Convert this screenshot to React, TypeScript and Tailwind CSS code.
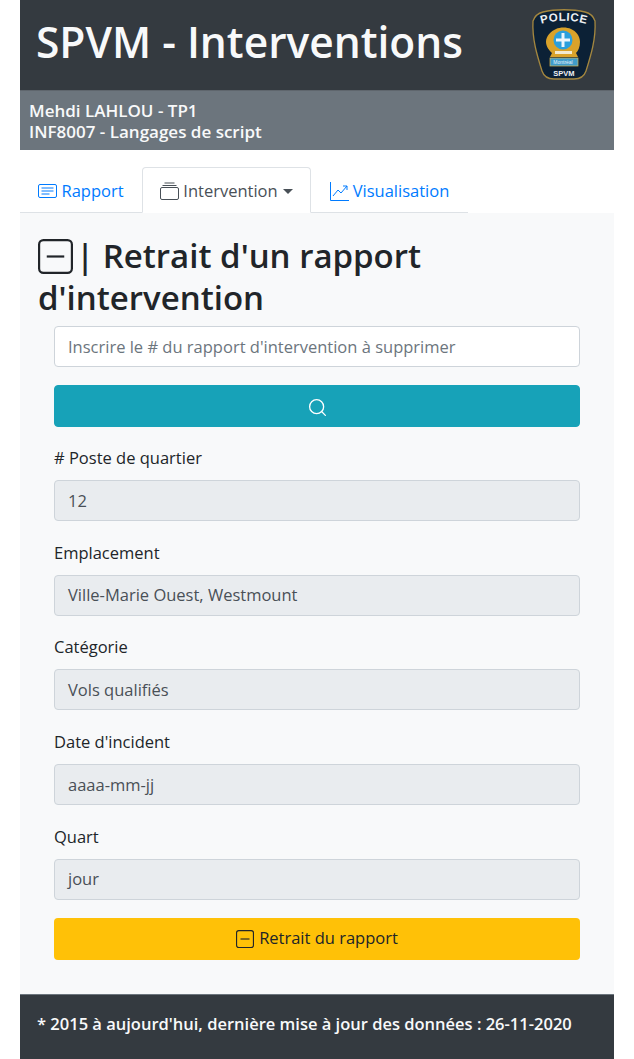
import { Search } from 'lucide-react';

const fields = [
    { label: "# Poste de quartier", value: "12" },
    { label: "Emplacement", value: "Ville-Marie Ouest, Westmount" },
    { label: "Catégorie", value: "Vols qualifiés" },
    { label: "Date d'incident", value: "aaaa-mm-jj" },
    { label: "Quart", value: "jour" }
];

const MinusSquare = ({ size, stroke = "currentColor" }: { size: number; stroke?: string }) => (
    <svg width={size} height={size} viewBox="0 0 16 16" fill="none">
        <rect x="0.5" y="0.5" width="15" height="15" rx="2" stroke={stroke} strokeWidth="1" />
        <path d="M4 8h8" stroke={stroke} strokeWidth="1" />
    </svg>
);

const PoliceBadge = () => (
    <svg width="66" height="72" viewBox="0 0 66 72" className="block">
        <path d="M2 12C4 6 8 4 12 3C24 0 42 0 54 3C58 4 62 6 64 12C65 30 60 46 55 62C53 68 49 70 43 70H23C17 70 13 68 11 62C6 46 1 30 2 12Z" fill="#0c2136" stroke="#a4873f" strokeWidth="1.3" />
        <path id="policeArc" d="M5 17C20 10 46 10 61 17" fill="none" />
        <text fontSize="11.5" fontWeight="700" fill="#eef1f4" letterSpacing="0.5" fontFamily="'Liberation Sans', sans-serif">
            <textPath href="#policeArc" startOffset="50%" textAnchor="middle">POLICE</textPath>
        </text>
        <path d="M25 20C29 18 36 18 40 20C45 22 49 27 49 33C49 38 47 42 45 44L47 48H19L21 44C19 42 15 38 15 33C15 27 20 22 25 20Z" fill="#d9a22a" />
        <circle cx="32" cy="31" r="9.5" fill="#2b9fdc" />
        <path d="M30.5 24h3v5.5H39v3h-5.5V38h-3v-5.500H25v-3h5.500z" fill="#eef6fb" />
        <rect x="24" y="42" width="17" height="3" fill="#f3ead0" />
        <rect x="19" y="49" width="28" height="8" fill="#3f9ccb" stroke="#e0b84a" strokeWidth="0.7" />
        <text x="32" y="55" textAnchor="middle" fontSize="5" fill="#e7f3fa" fontFamily="'Liberation Sans', sans-serif">Montréal</text>
        <text x="33" y="67" textAnchor="middle" fontSize="7.500" fontWeight="700" fill="#eef1f4" fontFamily="'Liberation Sans', sans-serif">SPVM</text>
    </svg>
);

export default function App() {
    return (
        <div className="min-h-[1059px] bg-white px-5 font-['Open_Sans',sans-serif] text-[16.5px] text-[#212529]">
            {/* Header */}
            <div className="flex h-[90px] items-center justify-between bg-[#343a40] pl-[16px] pr-[17px]">
                <h1 className="mb-[5px] text-[42.5px] font-semibold leading-none text-[#f8f9fa]">SPVM - Interventions</h1>
                <PoliceBadge />
            </div>
            <div className="h-[60px] border-t border-[#5f666d] bg-[#6c757d] pl-[9px] pt-[9px] text-[17px] font-semibold leading-[21px] text-[#f8f9fa]">
                <div>Mehdi LAHLOU - TP1</div>
                <div>INF8007 - Langages de script</div>
            </div>

            {/* Tabs */}
            <div className="h-[17px]" />
            <div className="flex h-[46px] w-[448px] border-b border-[#dee2e6]">
                <a className="flex w-[122px] items-center justify-center gap-[4px] pt-[3px] text-[#007bff]">
                    <svg width="19" height="16" viewBox="0 0 19 16" fill="none" stroke="currentColor">
                        <rect x="0.5" y="1.5" width="18" height="13" rx="1.5" />
                        <path d="M3.5 5h12M3.5 8h12M3.5 11h8" />
                    </svg>
                    Rapport
                </a>
                <a className="flex h-[46px] w-[169px] items-center justify-center gap-[4px] rounded-t border border-[#dee2e6] border-b-white bg-white pt-[2px] text-[#495057]">
                    <svg width="19" height="18" viewBox="0 0 19 18" fill="none" stroke="currentColor">
                        <rect x="0.5" y="5.5" width="18" height="12" rx="1.5" />
                        <path d="M2.5 3.5h14M4.5 1h10" />
                    </svg>
                    Intervention
                    <span className="ml-[1px] h-0 w-0 border-x-[5px] border-t-[5px] border-x-transparent border-t-[#495057]" />
                </a>
                <a className="flex w-[157px] items-center justify-center gap-[4px] pt-[3px] text-[#007bff]">
                    <svg width="19" height="19" viewBox="0 0 19 19" fill="none" stroke="currentColor">
                        <path d="M0.5 0v18.5H19" />
                        <path d="M3 14l5-6 3 3 6-7M13 4h4v4" />
                    </svg>
                    Visualisation
                </a>
            </div>

            {/* Body */}
            <div className="h-[781px] bg-[#f8f9fa] pt-[22px]">
                <h2 className="pl-[18px] pr-4 text-[33px] font-semibold leading-[42px]">
                    <span className="mr-[3px] inline-block align-[-6px]"><MinusSquare size={35} /></span>
                    | Retrait d'un rapport d'intervention
                </h2>
                <div className="mx-[34px] mt-[7px]">
                    <input
                        readOnly
                        placeholder="Inscrire le # du rapport d'intervention à supprimer"
                        className="block h-[41px] w-full rounded border border-[#ced4da] bg-white px-[13px] text-[16.5px] placeholder:text-[#6c757d]"
                    />
                    <button className="mt-[18px] flex h-[42px] w-full items-center justify-center rounded border border-[#17a2b8] bg-[#17a2b8] pt-[2px] text-white">
                        <Search size={21} strokeWidth={1.5} />
                    </button>
                    <div className="mt-[19px] flex flex-col gap-[19.67px]">
                        {fields.map((field) => (
                            <div key={field.label}>
                                <div className="mb-[10px] h-[24px] leading-[24px]">{field.label}</div>
                                <div className="flex h-[41px] items-center rounded border border-[#ced4da] bg-[#e9ecef] px-[13px] pt-[1px] text-[#495057]">
                                    {field.value}
                                </div>
                            </div>
                        ))}
                    </div>
                    <button className="mt-[18px] flex h-[42px] w-full items-center justify-center gap-[5px] rounded bg-[#ffc107] text-[#212529]">
                        <MinusSquare size={18} />
                        Retrait du rapport
                    </button>
                </div>
            </div>

            {/* Footer */}
            <div className="flex h-[65px] items-center whitespace-nowrap border-t border-[#6c757d] bg-[#343a40] pb-[6px] pl-[17px] font-semibold text-[#f8f9fa]">
                * 2015 à aujourd'hui, dernière mise à jour des données : 26-11-2020
            </div>
        </div>
    );
}
